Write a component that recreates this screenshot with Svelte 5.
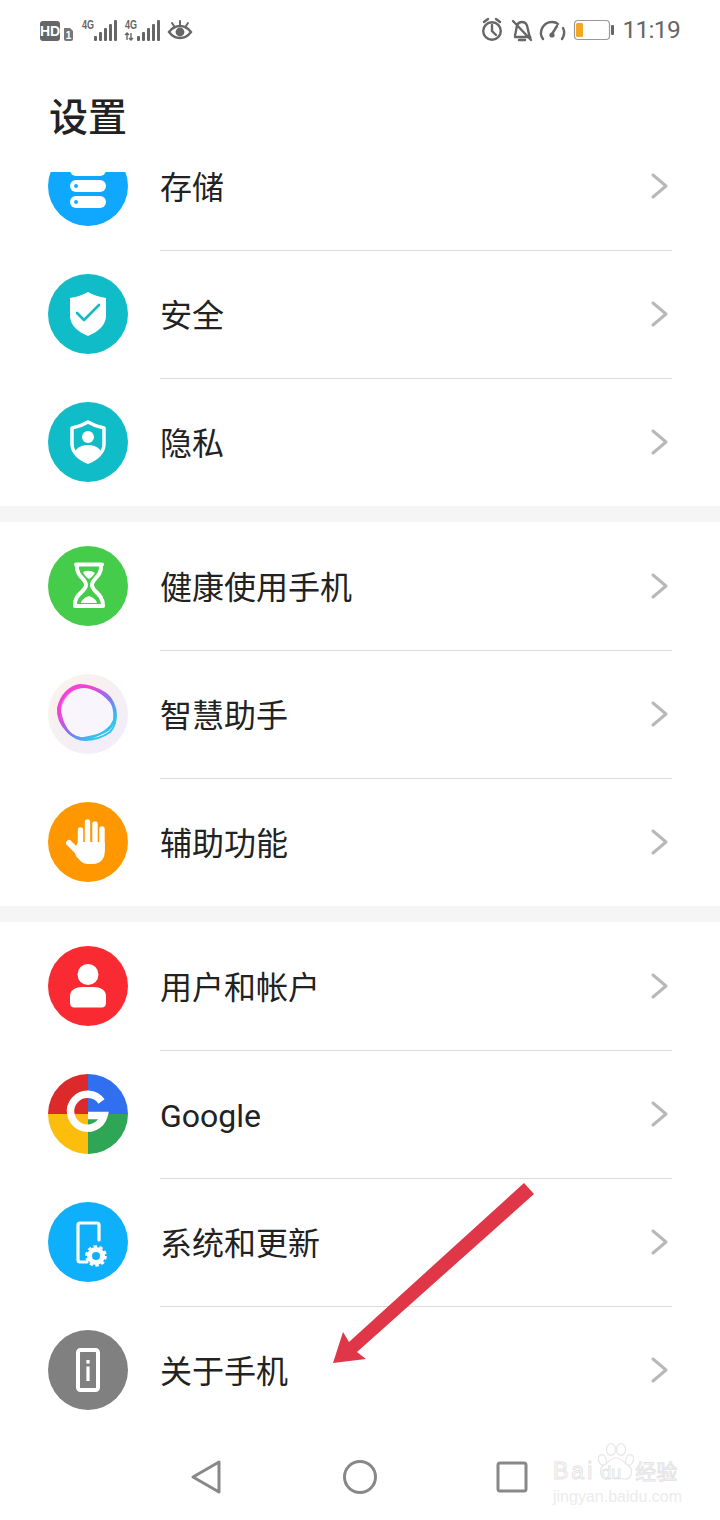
<script lang="ts">
  const groups = [
    [
      { icon: 'storage', label: '存储' },
      { icon: 'security', label: '安全' },
      { icon: 'privacy', label: '隐私' }
    ],
    [
      { icon: 'health', label: '健康使用手机' },
      { icon: 'assistant', label: '智慧助手' },
      { icon: 'access', label: '辅助功能' }
    ],
    [
      { icon: 'user', label: '用户和帐户' },
      { icon: 'google', label: 'Google' },
      { icon: 'system', label: '系统和更新' },
      { icon: 'about', label: '关于手机' }
    ]
  ];

  const colors: Record<string, string> = {
    storage: '#10a8ff',
    security: '#10bcc8',
    privacy: '#10bcc8',
    health: '#46cc4b',
    access: '#ff9800',
    user: '#fa2a32',
    system: '#0fb0fb',
    about: '#808080'
  };
</script>

{#snippet glyph(icon: string)}
  <svg class="icon" viewBox="0 0 80 80" width="80" height="80">
    {#if icon === 'google'}
      <defs>
        <clipPath id="disc"><circle cx="40" cy="40" r="40" /></clipPath>
      </defs>
      <g clip-path="url(#disc)">
        <rect width="40" height="40" fill="#dc2a2a" />
        <rect x="40" width="40" height="40" fill="#2f6ff0" />
        <rect y="40" width="40" height="40" fill="#fdbd0c" />
        <rect x="40" y="40" width="40" height="40" fill="#2fa655" />
      </g>
      <path d="M53.5 27.5 A17 17 0 1 0 56 41.5 H40" fill="none" stroke="#fff" stroke-width="7.5" />
    {:else if icon === 'assistant'}
      <defs>
        <linearGradient id="halo" x1="0" y1="0" x2="1" y2="1">
          <stop offset="0" stop-color="#fbf3ea" />
          <stop offset="1" stop-color="#f0ecfc" />
        </linearGradient>
        <linearGradient id="ring" x1="0.1" y1="0.1" x2="0.85" y2="0.9">
          <stop offset="0.2" stop-color="#f53fd2" />
          <stop offset="0.6" stop-color="#7f78f4" />
          <stop offset="0.9" stop-color="#2fc4ee" />
        </linearGradient>
      </defs>
      <circle cx="40" cy="40" r="40" fill="url(#halo)" />
      <path d="M12 34 C15 21 24 13 32 13 C40 13 50 17 56 21 C63 26 66 33 66 41 C66 48 64 53 60 57 C54 62 45 64 37 64 C30 64 25 60 21 56 C15 50 11 43 12 34 Z" fill="#f9f5fd" />
      <g fill="none" stroke="url(#ring)" stroke-width="1.9">
        <path d="M10 34 C13 21 22 12 32 11 C40 11 50 15 57 19 C64 24 68 33 68 41 C68 49 66 54 62 58 C55 63 45 66 37 66 C30 66 24 62 20 58 C14 52 9 43 10 34 Z" />
        <path d="M12 30 C16 19 26 13 36 13 C44 13 52 17 60 23 C66 30 67 38 66 46 C63 54 56 58 48 62 C40 67 30 65 23 60 C16 54 11 40 12 30 Z" />
        <path d="M11 38 C11 26 20 15 30 13 C42 11 54 18 62 27 C69 36 69 48 60 56 C52 62 44 62 36 64 C26 65 19 58 15 50 C12 46 11 42 11 38 Z" />
      </g>
      <path d="M11.5 38 C12 25 22 14 33 12.5" fill="none" stroke="#ee48d8" stroke-width="3" stroke-opacity="0.75" stroke-linecap="round" />
    {:else}
      <circle cx="40" cy="40" r="40" fill={colors[icon]} />
      {#if icon === 'storage'}
        <g fill="#fff">
          <rect x="22" y="18" width="36" height="12" rx="6" />
          <rect x="22" y="34" width="36" height="12" rx="6" />
          <rect x="22" y="50" width="36" height="12" rx="6" />
        </g>
        <circle cx="28" cy="40" r="1.9" fill="#10a8ff" />
        <circle cx="28" cy="56" r="1.9" fill="#10a8ff" />
      {:else if icon === 'security'}
        <path d="M40 18 C45 21 51 23 58 24 V42 C58 51 50 58 40 62 C30 58 22 51 22 42 V24 C29 23 35 21 40 18 Z" fill="#fff" />
        <path d="M29 39 L36 46 L51 31" fill="none" stroke="#10bcc8" stroke-width="2.6" stroke-linecap="round" stroke-linejoin="round" />
      {:else if icon === 'privacy'}
        <path d="M40 20 C45 23 50 25 56 26 V42 C56 50 49 57 40 60 C31 57 24 50 24 42 V26 C30 25 35 23 40 20 Z" fill="none" stroke="#fff" stroke-width="3.5" stroke-linejoin="round" />
        <circle cx="40" cy="35" r="6" fill="#fff" />
        <path d="M27 50 C29 45 34 43 40 43 C46 43 51 45 53 50 C50 55 45 58 40 60 C35 58 30 55 27 50 Z" fill="#fff" />
      {:else if icon === 'health'}
        <path d="M28 18.5 H54 M27 60 H55" stroke="#fff" stroke-width="4" stroke-linecap="round" />
        <path d="M29 19 C28 31 38 32 38 39 C38 46 26 47 27 60 M53 19 C54 31 44 32 44 39 C44 46 55 47 55 60" fill="none" stroke="#fff" stroke-width="4" stroke-linejoin="round" />
        <path d="M35 26 Q41 23 47 27 C45 30 43 32 41 33 C39 32 36 29 35 26 Z M33 57 C34 53 38 51 41 50 C44 51 48 53 49 57 Z" fill="#fff" />
      {:else if icon === 'access'}
        <g stroke="#fff" stroke-linecap="round" fill="none">
          <path d="M32.5 28 V46 M39.5 20 V44 M47 22 V46 M54 27 V48" stroke-width="5.4" />
          <path d="M21 41 L33 53" stroke-width="6" />
        </g>
        <path d="M30 40 H56.7 V50 C56.7 57 52 62 45 62 H40 C35 62 32 59 28 54 L26 48 Z" fill="#fff" />
      {:else if icon === 'user'}
        <circle cx="40" cy="28.5" r="10.5" fill="#fff" />
        <path d="M22 50 C22 44 28 41 34 41 H46 C52 41 58 44 58 50 V57 C58 60 56 61.5 54 61.5 H26 C24 61.5 22 60 22 57 Z" fill="#fff" />
      {:else if icon === 'system'}
        <path d="M51 38 V23 Q51 21 49 21 H32 Q30 21 30 23 V58 Q30 60 32 60 H39" fill="none" stroke="#fff" stroke-width="3.2" stroke-linecap="round" />
        <circle cx="48" cy="54" r="6.5" fill="none" stroke="#fff" stroke-width="5" />
        <circle cx="48" cy="54" r="9.5" fill="none" stroke="#fff" stroke-width="2.6" stroke-dasharray="3.4 2.6" />
      {:else if icon === 'about'}
        <rect x="30" y="20" width="20" height="40" rx="2.5" fill="none" stroke="#fff" stroke-width="4" />
        <rect x="38.4" y="30" width="3.2" height="3.6" fill="#fff" />
        <rect x="38.4" y="36.5" width="3.2" height="14.5" fill="#fff" />
      {/if}
    {/if}
  </svg>
{/snippet}

<div class="phone">
  <header class="status">
    <svg class="status-left" viewBox="40 0 156 60" width="156" height="60">
      <rect x="40" y="21" width="20" height="20" rx="3" fill="#666" />
      <text x="50" y="36" class="hd">HD</text>
      <path d="M64 28 H70 L73 31 V39 Q73 41 71 41 H66 Q64 41 64 39 Z" fill="#777" />
      <text x="68.5" y="39" class="sim">1</text>
      <text x="82" y="28.5" class="net" textLength="12" lengthAdjust="spacingAndGlyphs">4G</text>
      <text x="125" y="28.5" class="net" textLength="12" lengthAdjust="spacingAndGlyphs">4G</text>
      <path d="M127 33 V40 M131 33 V40 M125 35 L127 33 L129 35 M129 38 L131 40 L133 38" fill="none" stroke="#666" stroke-width="1.4" />
      <g fill="#666">
        <rect x="94" y="36" width="3" height="5" rx="1" />
        <rect x="99" y="32" width="3" height="9" rx="1" />
        <rect x="104" y="28" width="3" height="13" rx="1" />
        <rect x="109" y="24" width="3" height="17" rx="1" />
        <rect x="114" y="20" width="3" height="21" rx="1" />
        <rect x="137" y="36" width="3" height="5" rx="1" />
        <rect x="142" y="32" width="3" height="9" rx="1" />
        <rect x="147" y="28" width="3" height="13" rx="1" />
        <rect x="152" y="24" width="3" height="17" rx="1" />
        <rect x="157" y="20" width="3" height="21" rx="1" />
      </g>
      <path d="M169 32 C175 24 185 24 191 32 C185 40 175 40 169 32 Z" fill="none" stroke="#666" stroke-width="2.4" />
      <circle cx="180" cy="32" r="4.4" fill="#666" />
      <path d="M180 21 V25 M172 23 L174 26 M188 23 L186 26" stroke="#666" stroke-width="2" stroke-linecap="round" />
    </svg>
    <div class="status-right">
      <svg viewBox="480 0 136 60" width="136" height="60">
        <g fill="none" stroke="#666" stroke-width="2.4" stroke-linecap="round">
          <circle cx="493" cy="31" r="8.8" />
          <path d="M493 25 V31 L497 35 M485 22 L489 19 M501 22 L497 19" />
          <path d="M516 35 C518 31 516 22 523 22 C530 22 528 31 531 37 H516 M520 40 H526 M514 21 L532 40" />
          <path d="M544 39 C539 32 544 22 553 22 C556 22 558 23 559 24 M564 28 C566 32 565 36 563 39 M553 34 L558 26" />
        </g>
        <circle cx="553" cy="35" r="2.6" fill="#666" />
        <rect x="575.5" y="20.5" width="35" height="19" rx="3.5" fill="#fff" stroke="#999" stroke-width="1.2" />
        <rect x="577" y="23" width="7" height="14" rx="1.5" fill="#f5a623" />
        <rect x="612" y="25" width="3" height="10" rx="1" fill="#666" />
      </svg>
      <span class="time">11:19</span>
    </div>
  </header>

  <h1>设置</h1>

  <main class="list">
    {#each groups as group}
      <section class="group">
        {#each group as item}
          <div class="row">
            {@render glyph(item.icon)}
            <div class="cell">
              <span class="label">{item.label}</span>
              <svg class="chevron" viewBox="0 0 18 26" width="18" height="26">
                <path d="M2 2 L15 13 L2 24" fill="none" stroke="#b8b8b8" stroke-width="3" stroke-linecap="round" stroke-linejoin="round" />
              </svg>
            </div>
          </div>
        {/each}
      </section>
    {/each}
  </main>

  <nav class="nav">
    <svg viewBox="0 0 40 40" width="40" height="40">
      <path d="M4 20 L30 5 V35 Z" fill="none" stroke="#888" stroke-width="3" stroke-linejoin="round" />
    </svg>
    <svg viewBox="0 0 40 40" width="40" height="40">
      <circle cx="20" cy="20" r="15.5" fill="none" stroke="#888" stroke-width="3" />
    </svg>
    <svg viewBox="0 0 40 40" width="40" height="40">
      <rect x="6" y="6" width="28" height="28" rx="2" fill="none" stroke="#888" stroke-width="3" />
    </svg>
  </nav>

  <svg class="arrow" viewBox="320 1180 220 190" width="220" height="190">
    <path d="M524 1183 L534 1194 L357 1352 L366 1359 L333 1363 L343 1332 L349 1342 Z" fill="#e03748" />
  </svg>

  <div class="watermark">
    <svg class="paw" viewBox="0 0 36 38" width="36" height="38">
      <g fill="#fff" stroke="#e6e6e6" stroke-width="1.2">
        <ellipse cx="4.5" cy="17" rx="3.8" ry="5.5" transform="rotate(-20 4.5 17)" />
        <ellipse cx="13" cy="6.5" rx="4.5" ry="5.8" />
        <ellipse cx="23" cy="6.5" rx="4.5" ry="5.8" />
        <ellipse cx="31.5" cy="17" rx="3.8" ry="5.5" transform="rotate(20 31.5 17)" />
        <path d="M18 15 C24 15 26 20 31 23 C36 28 33 37 26 36 C22 35 14 35 10 36 C3 37 0 28 5 23 C10 20 12 15 18 15 Z" />
      </g>
    </svg>
    <div class="mark-top"><span class="bai">Bai</span><span class="du">du</span><span class="jy">经验</span></div>
    <div class="mark-url">jingyan.baidu.com</div>
  </div>
</div>

<style>
  :global(body) {
    margin: 0;
    background: #fff;
  }

  .phone {
    position: relative;
    width: 720px;
    height: 1520px;
    overflow: hidden;
    background: #fff;
    font-family: Roboto, "Noto Sans CJK SC", "Noto Sans", sans-serif;
    color: #222;
  }

  .status {
    display: flex;
    justify-content: space-between;
    align-items: center;
    height: 60px;
    padding: 0 40px;
  }

  .status svg {
    display: block;
  }

  .status-left {
    flex: none;
  }

  .status-right {
    display: flex;
    align-items: center;
    gap: 7px;
  }

  .hd {
    font: 700 14px "Liberation Sans", sans-serif;
    fill: #fff;
    text-anchor: middle;
  }

  .sim {
    font: 700 10px "Liberation Sans", sans-serif;
    fill: #fff;
    text-anchor: middle;
  }

  .net {
    font: 700 12px "Liberation Sans", sans-serif;
    fill: #666;
  }

  .time {
    font: 400 24.5px Roboto, sans-serif;
    letter-spacing: -0.7px;
    color: #666;
    line-height: 60px;
  }

  h1 {
    position: relative;
    z-index: 1;
    margin: 0;
    height: 112px;
    padding: 29px 0 0 49px;
    box-sizing: border-box;
    background: #fff;
    font-size: 39px;
    font-weight: 500;
    line-height: 50px;
    font-family: "Noto Sans CJK SC", sans-serif;
  }

  .list {
    display: flow-root;
    height: 1262px;
  }

  .group {
    background: #fff;
  }

  .group + .group {
    border-top: 16px solid #f5f5f5;
  }

  .group:first-child {
    margin-top: -50px;
  }

  .row {
    display: flex;
    align-items: center;
    height: 128px;
    padding-left: 48px;
  }

  .icon {
    flex: none;
    display: block;
  }

  .cell {
    flex: 1;
    display: flex;
    align-items: center;
    justify-content: space-between;
    align-self: stretch;
    margin: 0 48px -1px 32px;
    padding-bottom: 1px;
    box-shadow: inset 0 -1px 0 #dcdcdc;
  }

  .row:last-child .cell {
    box-shadow: none;
  }

  .label {
    font-size: 32px;
    line-height: 28px;
    padding-top: 3px;
  }

  .chevron {
    margin-right: 3px;
  }

  .nav {
    display: grid;
    grid-template-columns: 151px 152px 40px;
    padding: 23px 0 0 189px;
    box-sizing: border-box;
    height: 86px;
  }

  .arrow {
    position: absolute;
    left: 320px;
    top: 1180px;
  }

  .watermark {
    position: absolute;
    left: 553px;
    top: 1443px;
    width: 128px;
    height: 62px;
    color: #fff;
    font-family: "Liberation Sans", sans-serif;
  }

  .paw {
    position: absolute;
    left: 45px;
    top: 0;
  }

  .mark-top {
    position: absolute;
    left: 0;
    top: 13px;
    display: flex;
    align-items: baseline;
    line-height: 28px;
    -webkit-text-stroke: 1px #e4e4e4;
  }

  .bai {
    font-size: 23px;
    letter-spacing: 3px;
  }

  .du {
    position: relative;
    font-size: 18px;
    margin: 0 14px 0 6px;
    -webkit-text-stroke: 0.8px #e4e4e4;
  }

  .jy {
    font-size: 21px;
    font-family: "Noto Sans CJK SC", sans-serif;
  }

  .mark-url {
    position: absolute;
    left: 0;
    top: 45px;
    font-size: 16px;
    line-height: 18px;
    color: #ececec;
  }
</style>
